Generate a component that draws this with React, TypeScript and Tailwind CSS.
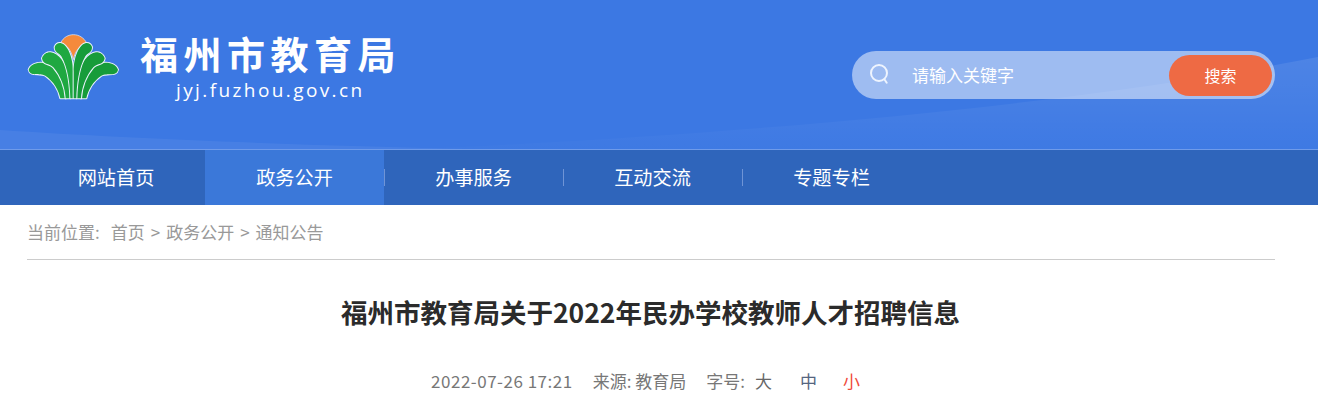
const cjk = "font-['Microsoft_YaHei','Noto_Sans_CJK_SC',sans-serif]"

const navItems = ['网站首页', '政务公开', '办事服务', '互动交流', '专题专栏']

function Leaves({ fill }: { fill: string }) {
  return (
    <g stroke="#eaf2fc" strokeWidth="6" strokeLinejoin="round" paintOrder="stroke" fill={fill}>
      <path d="M26 134C30 120 48 112 65 113C95 114 122 140 131 175L138 220H121C116 195 102 170 76 152C58 142 30 156 26 134Z" />
      <path d="M66 100C70 87 82 81 92 82C115 84 140 115 147 155L151 220H137C135 190 124 155 100 127C88 114 68 120 66 100Z" />
      <path d="M104 66C107 57 114 53 122 54C142 58 159 95 159 140V220H151C150 180 144 128 124 94C116 82 104 84 104 66Z" />
    </g>
  )
}

function Logo() {
  return (
    <svg width="110" height="85" viewBox="0 0 330 255" className="shrink-0">
      <path fill="#f58a3c" stroke="#eaf2fc" strokeWidth="2" d="M122 54C130 36 146 29 161 29C176 29 192 38 200 54C182 60 166 74 160 104C154 74 140 60 122 54Z" />
      <Leaves fill="#1fa841" />
      <g transform="translate(320 0) scale(-1 1)">
        <Leaves fill="#179c3a" />
      </g>
    </svg>
  )
}

export default function App() {
  return (
    <div className={`${cjk} w-[1318px] h-[405px] overflow-hidden bg-white`}>
      <header className="relative h-[150px] overflow-hidden border-b border-[#6f9bea] bg-[#3c78e3]">
        <svg className="absolute inset-0" width="1318" height="150" viewBox="0 0 1318 150">
          <defs>
            <linearGradient id="crest" x1="0" y1="0" x2="0" y2="1">
              <stop offset="0" stopColor="#ffffff" stopOpacity="0.09" />
              <stop offset="1" stopColor="#ffffff" stopOpacity="0.01" />
            </linearGradient>
          </defs>
          <path fill="#ffffff" fillOpacity="0.06" d="M0 130C150 140 350 147 520 150H0Z" />
          <path fill="url(#crest)" d="M400 150C800 132 1100 100 1318 57V150Z" />
        </svg>
        <div className="relative flex items-start h-full pl-5 pr-[43px]">
          <div className="mt-[25px]">
            <Logo />
          </div>
          <div className="ml-2.5 mt-[33px] flex flex-col w-[270px]">
            <div className="text-[38px] leading-10 font-bold tracking-[5.5px] text-white whitespace-nowrap">福州市教育局</div>
            <div className="ml-9 mt-[5px] text-[19px] leading-6 tracking-[2.4px] text-white font-['Open_Sans',sans-serif] whitespace-nowrap">jyj.fuzhou.gov.cn</div>
          </div>
          <div className="ml-auto mt-[51px] flex items-center w-[423px] h-12 rounded-full bg-white/50 pl-[18px] pr-[3px]">
            <svg width="20" height="22" viewBox="0 0 20 22" fill="none" stroke="#eef4fe" strokeWidth="2" className="shrink-0">
              <circle cx="9" cy="9" r="8" />
              <path d="M14.5 15.5l2.2 3.2" strokeLinecap="round" />
            </svg>
            <span className="ml-[22px] text-[17px] text-white">请输入关键字</span>
            <button className="ml-auto w-[103px] h-[41px] rounded-full bg-[#ee6a44] text-white text-base">搜索</button>
          </div>
        </div>
      </header>

      <nav className="flex h-[55px] bg-[#2f65bb] pl-[27px]">
        {navItems.map((item, i) => (
          <div key={item} className={`relative flex items-center justify-center text-[19.2px] text-white ${i === 0 ? 'w-[178px]' : 'w-[179px]'} ${i === 1 ? 'bg-[#3b78d9]' : ''}`}>
            {item}
            {i > 0 && i < 4 && <span className="absolute right-[-1px] top-[19px] h-[17px] w-px bg-[#6f94d6]" />}
          </div>
        ))}
      </nav>

      <main className="mx-[27px] w-[1248px]">
        <div className="flex h-[55px] items-center border-b border-[#cccccc] pb-px text-[17px] text-[#999999]">
          当前位置:<span className="ml-[11px]">首页</span>
          <span className="mx-1.5">&gt;</span>政务公开
          <span className="mx-1.5">&gt;</span>通知公告
        </div>
        <h1 className="mt-[34px] text-center text-[26.5px] leading-9 font-bold text-[#2b2b2b] pr-px">福州市教育局关于2022年民办学校教师人才招聘信息</h1>
        <div className="mt-[39px] flex justify-center text-[17px] leading-6 text-[#777777] pr-[11px]">
          <span className="tracking-[0.5px]">2022-07-26 17:21</span>
          <span className="ml-5">来源: 教育局</span>
          <span className="ml-5">字号:</span>
          <span className="ml-2.5 text-[#666666]">大</span>
          <span className="ml-[28px] text-[#55657f]">中</span>
          <span className="ml-[26px] text-[#f04a3a]">小</span>
        </div>
      </main>
    </div>
  )
}
